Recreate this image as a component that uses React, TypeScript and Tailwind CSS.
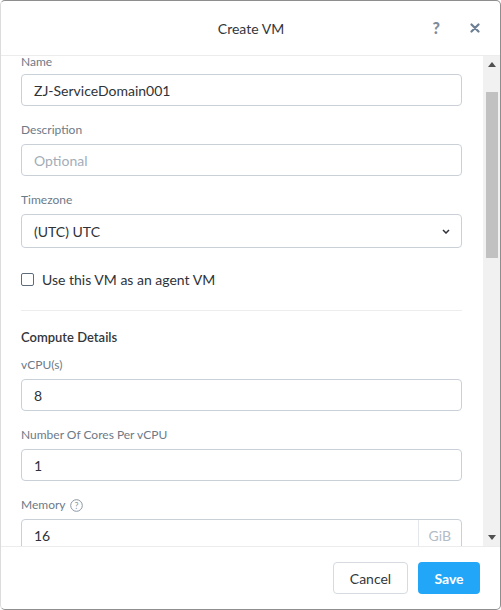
import React from 'react';

const font = { fontFamily: 'Lato, "Liberation Sans", sans-serif' };

function Label({ children, first }: { children: React.ReactNode; first?: boolean }) {
  return (
    <div className={first ? 'text-[12px] leading-[12px] mb-[6px] text-[#6d7a88] flex items-center gap-[4px]' : 'text-[12px] leading-[16px] mb-[6px] text-[#6d7a88] flex items-center gap-[4px]'}>
      {children}
    </div>
  );
}

function Field({ label, value, placeholder, first }: { label: string; value?: string; placeholder?: string; first?: boolean }) {
  return (
    <div className="mb-[16px]">
      <Label first={first}>{label}</Label>
      <div className="h-[32px] border border-[#c9d0d8] rounded-[4px] flex items-center px-[12px] text-[14px]">
        {value ? <span className="text-[#2f3338]">{value}</span> : <span className="text-[#a3adb8]">{placeholder}</span>}
      </div>
    </div>
  );
}

function Scrollbar() {
  return (
    <div className="w-[17px] bg-[#f1f1f1] flex flex-col items-center">
      <div className="h-[17px] w-full flex items-center justify-center">
        <svg width="8" height="5" viewBox="0 0 8 5"><path d="M0 5 L4 0 L8 5 Z" fill="#505050" /></svg>
      </div>
      <div className="mt-[19px] h-[166px] w-[12px] bg-[#c1c1c1]" />
      <div className="flex-1" />
      <div className="h-[17px] w-full flex items-center justify-center">
        <svg width="8" height="5" viewBox="0 0 8 5"><path d="M0 0 L4 5 L8 0 Z" fill="#505050" /></svg>
      </div>
    </div>
  );
}

export default function App() {
  return (
    <div style={font} className="w-[501px] h-[610px] bg-white border border-[#8e8e8e] border-l-[#dcdcdc] rounded-[5px] flex flex-col overflow-hidden">
      <div className="h-[55px] shrink-0 border-b border-[#ececec] flex items-center relative">
        <div className="flex-1 text-center text-[14px] text-[#33373c] pl-[1px]">Create VM</div>
        <div className="absolute right-[20px] top-0 h-full flex items-center gap-[30px]">
          <span className="text-[16px] font-black text-[#7d8b9a]">?</span>
          <svg width="10" height="10" viewBox="0 0 10 10">
            <path d="M1.5 1.5 L8.5 8.5 M8.5 1.5 L1.5 8.5" stroke="#6c7f93" strokeWidth="2.2" strokeLinecap="round" />
          </svg>
        </div>
      </div>

      <div className="h-[490px] shrink-0 flex">
        <div className="flex-1 overflow-hidden pl-[20px] pr-[21px]">
          <Field first label="Name" value="ZJ-ServiceDomain001" />
          <Field label="Description" placeholder="Optional" />
          <div>
            <Label>Timezone</Label>
            <div className="h-[34px] border border-[#c9d0d8] rounded-[4px] flex items-center justify-between pl-[12px] pr-[11px] text-[14px] text-[#2f3338]">
              <span>(UTC) UTC</span>
              <svg width="8" height="5" viewBox="0 0 8 5">
                <path d="M1 1 L4 4 L7 1" stroke="#2f3338" strokeWidth="1.5" fill="none" />
              </svg>
            </div>
          </div>
          <div className="mt-[21px] h-[20px] flex items-center gap-[8px]">
            <div className="w-[13px] h-[13px] border border-[#5f6b78] rounded-[2px]" />
            <span className="text-[14px] text-[#2f3338]">Use this VM as an agent VM</span>
          </div>
          <div className="mt-[21px] h-px bg-[#ededed]" />
          <div className="mt-[16px] h-[20px] leading-[20px] text-[13px] font-semibold text-[#33373c]">Compute Details</div>
          <div className="mt-[10px]">
            <Field label="vCPU(s)" value="8" />
            <Field label="Number Of Cores Per vCPU" value="1" />
            <div>
              <Label>
                Memory
                <svg width="13" height="13" viewBox="0 0 13 13">
                  <circle cx="6.5" cy="6.5" r="5.8" stroke="#8b96a2" strokeWidth="1" fill="none" />
                  <text x="6.5" y="9.6" textAnchor="middle" fontSize="9" fill="#8b96a2" fontFamily="Lato, sans-serif">?</text>
                </svg>
              </Label>
              <div className="h-[32px] border border-[#c9d0d8] rounded-[4px] flex items-center text-[14px]">
                <span className="flex-1 pl-[12px] text-[#2f3338]">16</span>
                <span className="h-full border-l border-[#e3e7eb] flex items-center px-[10px] text-[#b3bcc5]">GiB</span>
              </div>
            </div>
          </div>
        </div>
        <Scrollbar />
      </div>

      <div className="flex-1 border-t border-[#ececec] flex items-center justify-end gap-[10px] pr-[20px]">
        <button className="h-[32px] w-[75px] border border-[#d5dbe1] rounded-[4px] text-[14px] text-[#33373c] bg-white">Cancel</button>
        <button className="h-[32px] w-[62px] rounded-[4px] text-[14px] font-bold text-white bg-[#22a6f7]">Save</button>
      </div>
    </div>
  );
}
